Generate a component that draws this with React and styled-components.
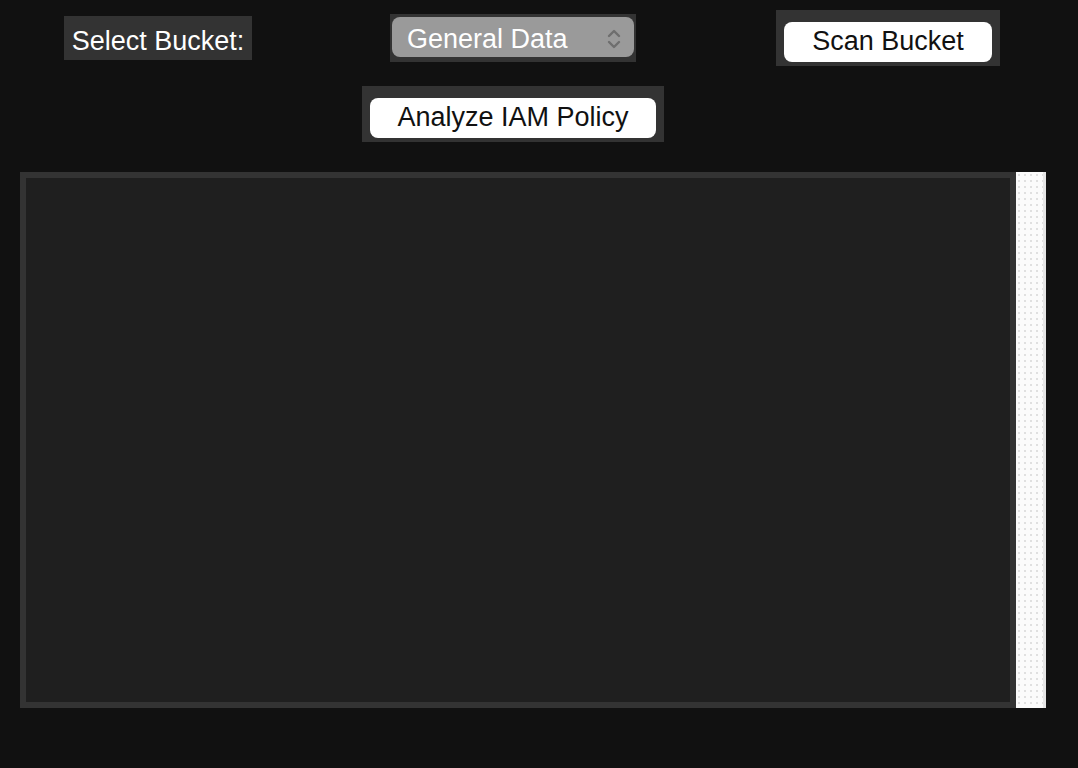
import styled, { createGlobalStyle } from "styled-components";

const GlobalStyle = createGlobalStyle`
  html, body {
    margin: 0;
    padding: 0;
    background: #111111;
  }
  body {
    font-family: "Liberation Sans", Arial, sans-serif;
  }
`;

const Page = styled.div`
  width: 1078px;
  height: 768px;
  box-sizing: border-box;
  padding: 10px 32px 0 20px;
  display: grid;
  grid-template-columns: 276px 434px 316px;
  grid-template-rows: 56px 56px 566px;
  row-gap: 20px;
  align-items: center;
  justify-items: center;
`;

const Frame = styled.div`
  background: #333333;
  box-sizing: border-box;
  padding: ${({ $pad }) => $pad};
  ${({ $col }) => $col && `grid-column: ${$col};`}
`;

const Label = styled.div`
  background: #333333;
  color: #ffffff;
  font-size: 27px;
  line-height: 30px;
  padding: 10px 8px 4px;
`;

const SelectBox = styled.div`
  width: 242px;
  height: 40px;
  box-sizing: border-box;
  background: #9a9a9a;
  border-radius: 8px;
  display: flex;
  align-items: center;
  justify-content: space-between;
  padding: 3px 13px 0 15px;
  color: #ffffff;
  font-size: 27px;
  line-height: 30px;
`;

const Button = styled.button`
  display: block;
  width: ${({ $w }) => $w}px;
  height: 40px;
  box-sizing: border-box;
  border: none;
  border-radius: 8px;
  background: #ffffff;
  color: #111111;
  font-family: "Liberation Sans", Arial, sans-serif;
  font-size: 27px;
  line-height: 30px;
  padding: 4px 0 6px;
  text-align: center;
`;

const Output = styled.div`
  grid-column: 1 / 4;
  align-self: start;
  justify-self: stretch;
  height: 536px;
  display: flex;
  margin-top: 10px;
`;

const TextArea = styled.div`
  flex: 0 0 996px;
  box-sizing: border-box;
  border: 6px solid #333333;
  background: #1f1f1f;
`;

const ScrollBar = styled.div`
  flex: 0 0 30px;
  box-sizing: border-box;
  background-color: #fbfbfb;
  background-image: radial-gradient(circle, #e0e0e0 0.8px, transparent 1.2px);
  background-size: 6px 6px;
  border-right: 3px solid #e6e6e6;
`;

const Chevrons = () => (
  <svg width="14" height="22" viewBox="0 0 14 22" fill="none">
    <path d="M2 8 L7 3 L12 8" stroke="#6e6e6e" strokeWidth="2.4" strokeLinecap="round" strokeLinejoin="round" />
    <path d="M2 14 L7 19 L12 14" stroke="#6e6e6e" strokeWidth="2.4" strokeLinecap="round" strokeLinejoin="round" />
  </svg>
);

export default function App() {
  return (
    <>
      <GlobalStyle />
      <Page>
        <Label>Select Bucket:</Label>
        <Frame $pad="3px 2px 5px">
          <SelectBox>
            <span>General Data</span>
            <Chevrons />
          </SelectBox>
        </Frame>
        <Frame $pad="12px 8px 4px">
          <Button $w={208}>Scan Bucket</Button>
        </Frame>
        <Frame $col="2" $pad="12px 8px 4px">
          <Button $w={286}>Analyze IAM Policy</Button>
        </Frame>
        <Output>
          <TextArea />
          <ScrollBar />
        </Output>
      </Page>
    </>
  );
}
